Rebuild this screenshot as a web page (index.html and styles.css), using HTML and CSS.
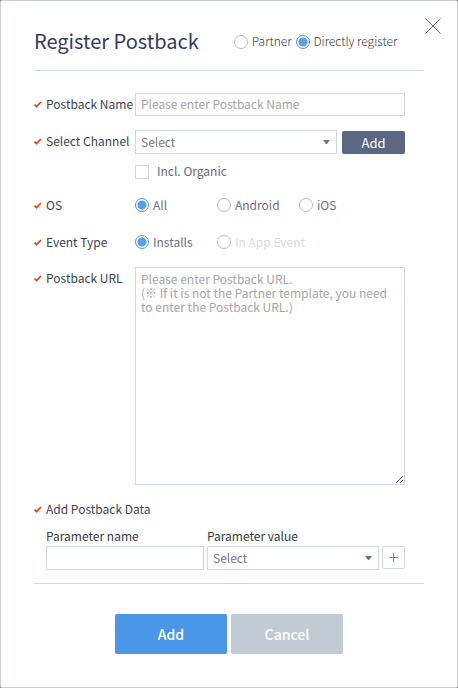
FILE: index.html
```html
<!DOCTYPE html>
<html lang="en">
<head>
<meta charset="utf-8">
<title>Register Postback</title>
<meta name="viewport" content="width=device-width, initial-scale=1">
<link rel="stylesheet" href="styles.css">
</head>
<body>
<svg class="sprite" aria-hidden="true">
  <symbol id="check" viewBox="0 0 8 7"><path d="M.5 3.500 2.500 5.500 7 1" fill="none" stroke="#f23a0a" stroke-width="1.700"/></symbol>
</svg>
<form class="dialog">
  <header class="head">
    <h1 class="title">Register Postback</h1>
    <div class="modes">
      <label class="choice"><input type="radio" name="mode"><span>Partner</span></label>
      <label class="choice"><input type="radio" name="mode" checked><span>Directly register</span></label>
    </div>
    <button class="close" type="button" aria-label="Close">
      <svg width="16" height="16" viewBox="0 0 16 16"><path d="M.5.5l15 15M15.500.5l-15 15" stroke="#62666e" fill="none"/></svg>
    </button>
  </header>

  <div class="fields">
    <label class="label" for="name"><svg class="tick"><use href="#check"/></svg><span>Postback Name</span></label>
    <input class="box name" id="name" type="text" placeholder="Please enter Postback Name">

    <label class="label" for="channel"><svg class="tick"><use href="#check"/></svg><span>Select Channel</span></label>
    <div class="channel">
      <select class="box select" id="channel"><option>Select</option></select>
      <button class="add" type="button">Add</button>
    </div>

    <label class="choice organic"><input type="checkbox"><span>Incl. Organic</span></label>

    <span class="label short" id="os"><svg class="tick"><use href="#check"/></svg><span>OS</span></span>
    <div class="options" role="radiogroup" aria-labelledby="os">
      <label class="choice"><input type="radio" name="os" checked><span>All</span></label>
      <label class="choice"><input type="radio" name="os"><span>Android</span></label>
      <label class="choice"><input type="radio" name="os"><span>iOS</span></label>
    </div>

    <span class="label short" id="event"><svg class="tick"><use href="#check"/></svg><span>Event Type</span></span>
    <div class="options" role="radiogroup" aria-labelledby="event">
      <label class="choice"><input type="radio" name="event" checked><span>Installs</span></label>
      <label class="choice wide off"><input type="radio" name="event" disabled><span>In App Event</span></label>
    </div>

    <label class="label" for="url"><svg class="tick"><use href="#check"/></svg><span>Postback URL</span></label>
    <textarea class="box area" id="url" placeholder="Please enter Postback URL.&#10;(※ If it is not the Partner template, you need to enter the Postback URL.)"></textarea>
  </div>

  <section class="data">
    <h2 class="label"><svg class="tick"><use href="#check"/></svg><span>Add Postback Data</span></h2>
    <div class="params">
      <label class="caption" for="pname">Parameter name</label>
      <label class="caption" for="pvalue">Parameter value</label>
      <input class="box pname" id="pname" type="text">
      <select class="box select" id="pvalue"><option>Select</option></select>
      <button class="plus" type="button" aria-label="Add parameter">
        <svg width="9" height="9" viewBox="0 0 9 9"><path d="M4.500 0v9M0 4.500h9" stroke="#858990" fill="none"/></svg>
      </button>
    </div>
  </section>

  <footer class="actions">
    <button class="action" type="submit">Add</button>
    <button class="action cancel" type="button">Cancel</button>
  </footer>
</form>
</body>
</html>
```
FILE: styles.css
```css
* {
  box-sizing: border-box;
}

body {
  margin: 0;
  background: #777983;
}

body,
input,
select,
textarea,
button {
  font-family: "Noto Sans CJK KR", "Noto Sans", sans-serif;
  font-size: 12px;
  font-weight: 400;
}

.sprite {
  position: absolute;
  width: 0;
  height: 0;
}

.dialog {
  min-height: 100vh;
  padding: 0 33px;
  background: #fff;
  border: 1px solid #c9cbd8;
  border-radius: 2px;
}

.head {
  position: relative;
  display: flex;
  align-items: center;
  gap: 35px;
  height: 70px;
  padding-top: 12px;
  border-bottom: 1px solid #d5d8df;
}

.title {
  margin: 0;
  padding-bottom: 2px;
  font-size: 20px;
  font-weight: 400;
  color: #333c5c;
  white-space: nowrap;
}

.modes {
  display: flex;
  gap: 4px;
  font-weight: 300;
  color: #33373f;
}

.close {
  position: absolute;
  top: 17px;
  right: -17px;
  display: flex;
  padding: 0;
  border: 0;
  background: none;
}

.fields {
  display: grid;
  grid-template-columns: 101px 1fr;
  grid-template-rows: 23px 24px 15px 23px 19px auto;
  row-gap: 14px;
  padding: 22px 19px 0 0;
}

.label {
  display: flex;
  align-items: center;
  gap: 4px;
  height: 23px;
  margin: 0;
  font-size: 12px;
  font-weight: 400;
  color: #3c4254;
  white-space: nowrap;
}

.short {
  height: 16px;
}

.label span,
.choice span {
  padding-bottom: 2px;
}

.tick {
  flex: none;
  width: 8px;
  height: 7px;
}

.box {
  width: 100%;
  min-width: 0;
  height: 24px;
  margin: 0;
  padding: 0 5px 2px;
  border: 1px solid #d5d7de;
  border-radius: 0;
  outline: 0;
  background: #fff;
  color: #747c8a;
}

.name {
  height: 23px;
}

.box::placeholder {
  color: #a6a6a6;
  opacity: 1;
}

.select {
  appearance: none;
  background: url("data:image/svg+xml,%3Csvg xmlns='http://www.w3.org/2000/svg' width='7' height='4'%3E%3Cpath d='M0 0h7L4 4H3z' fill='%23687489'/%3E%3C/svg%3E") no-repeat right 6px center #fff;
}

.channel {
  display: flex;
  align-items: flex-end;
  gap: 5px;
}

.add {
  flex: none;
  width: 63px;
  height: 23px;
  padding: 0 0 1px;
  border: 0;
  border-radius: 2px;
  background: #596783;
  color: #fff;
  font-size: 13px;
}

.choice {
  display: flex;
  align-items: center;
  gap: 4px;
  height: 16px;
  white-space: nowrap;
}

.choice input {
  appearance: none;
  flex: none;
  width: 14px;
  height: 14px;
  margin: 0;
  border: 1px solid #b9bbc0;
  border-radius: 50%;
  background: #fff;
}

.choice input[type="checkbox"] {
  border-color: #d0d3da;
  border-radius: 1px;
}

.choice input:checked {
  border-color: #4a96e8;
  background: radial-gradient(circle, #5b9fec 4px, #fff 5px);
}

.organic {
  grid-column: 2;
  gap: 8px;
  margin-top: -4px;
  color: #666c78;
}

.organic span {
  padding-bottom: 4px;
}

.options {
  display: grid;
  grid-template-columns: 82px 82px 1fr;
  align-items: start;
  color: #6c7280;
}

.wide {
  grid-column: 2 / 4;
}

.off {
  color: #d9dce3;
}

.area {
  display: block;
  height: 218px;
  padding: 4px 5px;
  line-height: 14px;
}

.data {
  padding: 12px 0;
  border-bottom: 1px solid #d5d8df;
}

.data .label {
  height: 24px;
}

.params {
  display: grid;
  grid-template-columns: 158px 1fr 23px;
  column-gap: 3px;
  row-gap: 1px;
  padding: 6px 19px 0 12px;
}

.data {
  padding-bottom: 13px;
}

.caption {
  height: 18px;
  line-height: 17px;
  color: #333944;
}

.pname {
  grid-column: 1;
}

.plus {
  display: flex;
  align-items: center;
  justify-content: center;
  height: 23px;
  padding: 0;
  border: 1px solid #d5d7de;
  border-radius: 2px;
  background: #fff;
}

.actions {
  display: flex;
  justify-content: center;
  gap: 4px;
  padding: 30px 0 33px;
}

.action {
  width: 112px;
  height: 40px;
  padding: 0;
  border: 0;
  border-radius: 2px;
  background: #4a96e8;
  color: #fff;
  font-size: 14px;
  font-weight: 500;
}

.cancel {
  background: #c2cad4;
}
```
